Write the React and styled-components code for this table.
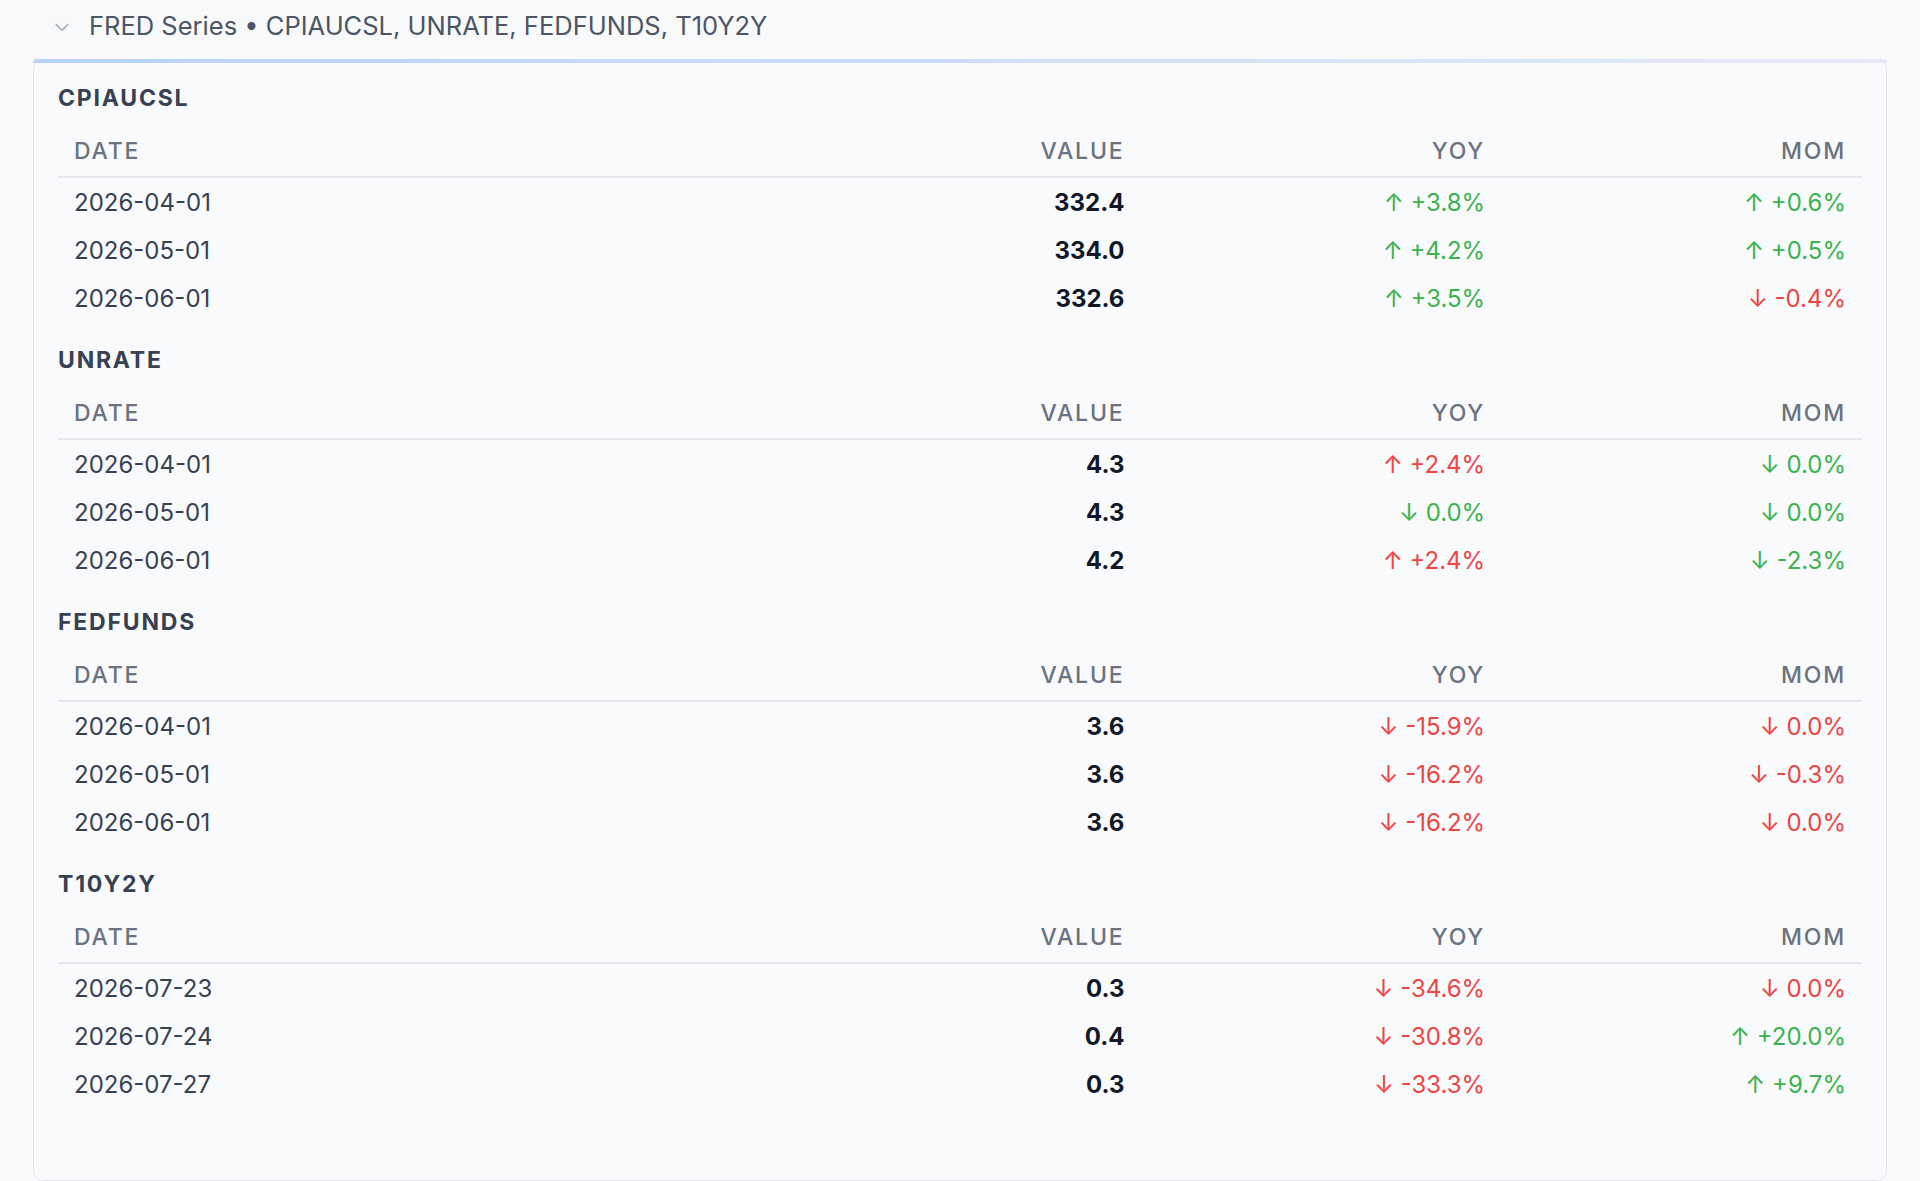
import React from 'react';
import styled, { createGlobalStyle } from 'styled-components';

const GlobalStyle = createGlobalStyle`
  body {
    margin: 0;
    background: #f8f9fb;
    font-family: Inter, "Noto Sans", sans-serif;
  }
`;

const Page = styled.div`
  padding: 0 33px;
`;

const Header = styled.div`
  display: flex;
  align-items: center;
  gap: 17px;
  height: 50px;
  padding-left: 19px;
  margin-bottom: 9px;
  color: #4b5563;
  font-size: 25.5px;
`;

const Chevron = styled.svg`
  width: 20px;
  height: 20px;
  color: #9ca3af;
  margin-top: 3px;
`;

const Card = styled.div`
  position: relative;
  background: #f9fafb;
  border: 1px solid #e3e5e9;
  border-radius: 10px;
  padding: 0 24px 72px;

  &::before {
    content: '';
    position: absolute;
    top: -1px;
    left: -1px;
    right: -1px;
    height: 4px;
    border-radius: 10px 10px 0 0;
    background: linear-gradient(90deg, #b9d2f7 0%, #cfdef6 50%, #e4eaf4 100%);
  }
`;

const Section = styled.div`
  padding-top: 20px;
`;

const SeriesName = styled.div`
  height: 36px;
  line-height: 36px;
  margin-bottom: 10px;
  font-size: 23px;
  font-weight: 700;
  letter-spacing: 1.8px;
  color: #374151;
`;

const Row = styled.div`
  display: grid;
  grid-template-columns: 40% 20% 20% 20%;
  height: ${p => (p.$head ? '52px' : '48px')};
  align-items: center;
  border-bottom: ${p => (p.$head ? '2px solid #e5e7eb' : 'none')};
  box-sizing: border-box;
`;

const Cell = styled.div`
  padding: 0 16px;
  text-align: ${p => (p.$right ? 'right' : 'left')};
  font-size: 24px;
  color: ${p => p.$color || '#374151'};
  font-weight: ${p => (p.$bold ? 700 : 400)};
  white-space: nowrap;
`;

const HeadCell = styled(Cell)`
  font-size: 23px;
  font-weight: 500;
  letter-spacing: 1.8px;
  color: #6b7280;
  text-transform: uppercase;
`;

const GREEN = '#3bb34f';
const RED = '#ef4444';

const series = [
  {
    name: 'CPIAUCSL',
    rows: [
      ['2026-04-01', '332.4', ['↑', '+3.8%', 'g'], ['↑', '+0.6%', 'g']],
      ['2026-05-01', '334.0', ['↑', '+4.2%', 'g'], ['↑', '+0.5%', 'g']],
      ['2026-06-01', '332.6', ['↑', '+3.5%', 'g'], ['↓', '-0.4%', 'r']],
    ],
  },
  {
    name: 'UNRATE',
    rows: [
      ['2026-04-01', '4.3', ['↑', '+2.4%', 'r'], ['↓', '0.0%', 'g']],
      ['2026-05-01', '4.3', ['↓', '0.0%', 'g'], ['↓', '0.0%', 'g']],
      ['2026-06-01', '4.2', ['↑', '+2.4%', 'r'], ['↓', '-2.3%', 'g']],
    ],
  },
  {
    name: 'FEDFUNDS',
    rows: [
      ['2026-04-01', '3.6', ['↓', '-15.9%', 'r'], ['↓', '0.0%', 'r']],
      ['2026-05-01', '3.6', ['↓', '-16.2%', 'r'], ['↓', '-0.3%', 'r']],
      ['2026-06-01', '3.6', ['↓', '-16.2%', 'r'], ['↓', '0.0%', 'r']],
    ],
  },
  {
    name: 'T10Y2Y',
    rows: [
      ['2026-07-23', '0.3', ['↓', '-34.6%', 'r'], ['↓', '0.0%', 'r']],
      ['2026-07-24', '0.4', ['↓', '-30.8%', 'r'], ['↑', '+20.0%', 'g']],
      ['2026-07-27', '0.3', ['↓', '-33.3%', 'r'], ['↑', '+9.7%', 'g']],
    ],
  },
];

const Change = ({ c }) => (
  <Cell $right $color={c[2] === 'g' ? GREEN : RED}>
    {c[0]} {c[1]}
  </Cell>
);

export default function App() {
  return (
    <>
      <GlobalStyle />
      <Page>
        <Header>
          <Chevron viewBox="0 0 24 24" fill="none" stroke="currentColor" strokeWidth="1.6" strokeLinecap="round" strokeLinejoin="round">
            <path d="M5 9l7 7 7-7" />
          </Chevron>
          <span>FRED Series • CPIAUCSL, UNRATE, FEDFUNDS, T10Y2Y</span>
        </Header>
        <Card>
          {series.map(s => (
            <Section key={s.name}>
              <SeriesName>{s.name}</SeriesName>
              <Row $head>
                <HeadCell>Date</HeadCell>
                <HeadCell $right>Value</HeadCell>
                <HeadCell $right>YoY</HeadCell>
                <HeadCell $right>MoM</HeadCell>
              </Row>
              {s.rows.map(r => (
                <Row key={r[0]}>
                  <Cell>{r[0]}</Cell>
                  <Cell $right $bold $color="#111827">{r[1]}</Cell>
                  <Change c={r[2]} />
                  <Change c={r[3]} />
                </Row>
              ))}
            </Section>
          ))}
        </Card>
      </Page>
    </>
  );
}
